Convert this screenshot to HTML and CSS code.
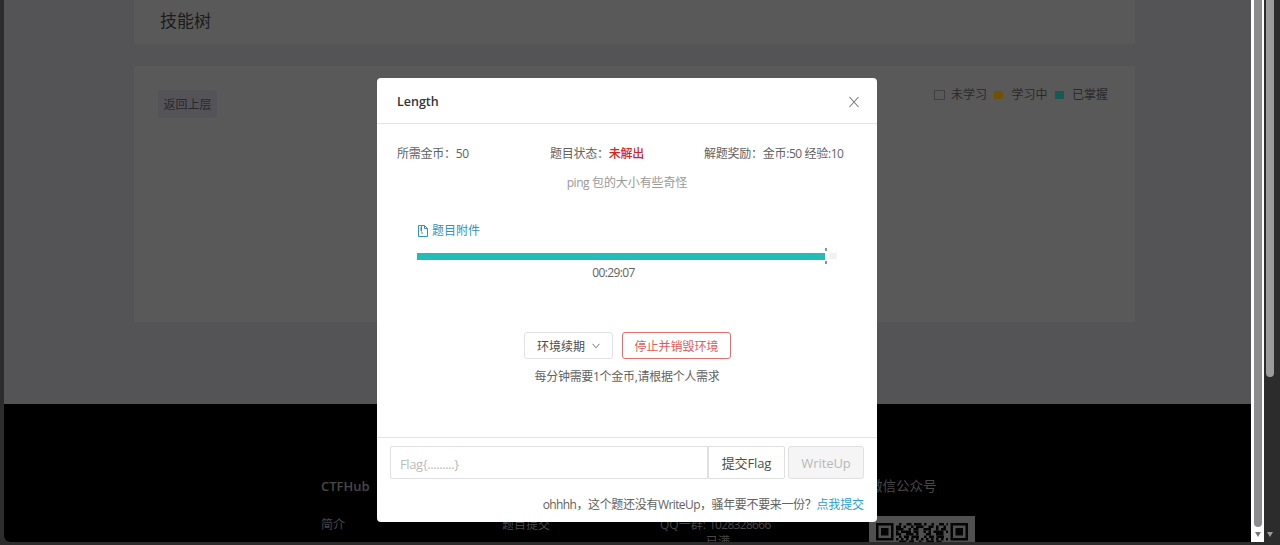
FILE: index.html
```
<!DOCTYPE html>
<html lang="zh-CN">
<head>
    <meta charset="UTF-8" />
    <meta name="viewport" content="width=device-width, initial-scale=1.0" />
    <title>CTFHub</title>
    <link rel="stylesheet" href="styles.css">
</head>
<body>
    <div class="window">
        <div class="page">
            <main class="content">
                <div class="card title-card">技能树</div>
                <div class="card tree-card">
                    <button class="back">返回上层</button>
                    <div class="legend">
                        <i class="dot todo"></i><span>未学习</span>
                        <i class="dot doing"></i><span>学习中</span>
                        <i class="dot done"></i><span>已掌握</span>
                    </div>
                </div>
            </main>
            <footer class="footer">
                <div class="col col-about">
                    <h4>CTFHub</h4>
                    <p>简介</p>
                </div>
                <div class="col col-submit">
                    <h4>&nbsp;</h4>
                    <p>题目提交</p>
                </div>
                <div class="col col-qq">
                    <h4>&nbsp;</h4>
                    <p>QQ一群: <span class="number">1028328666</span></p>
                    <p class="full">已满</p>
                </div>
                <div class="col col-wechat">
                    <h4>微信公众号</h4>
                    <svg class="qr" viewBox="0 0 106 106" width="106" height="106">
                        <rect width="106" height="106" fill="#505050" />
                        <g fill="none" stroke="#050505" stroke-width="2.5">
                            <rect x="8.25" y="8.25" width="15" height="15" />
                            <rect x="82.75" y="8.25" width="15" height="15" />
                            <path stroke-dasharray="2.5 5 5 2.5 7.5 2.5 2.5 5" d="M30 8.2H79" />
                            <path stroke-dasharray="5 2.5 2.5 5 2.5 2.5 7.5 5" d="M27 10.7H77" />
                            <path stroke-dasharray="7.5 5 2.5 2.5 5 5" d="M27 13.2H79" />
                            <path stroke-dasharray="2.5 2.5 10 2.5 5 5 2.5 2.5" d="M27 15.7H79" />
                            <path stroke-dasharray="5 5 7.5 2.5 2.5 7.5" d="M27 18.2H77" />
                            <path stroke-dasharray="2.5 2.5 5 2.5 7.5 5" d="M30 20.7H79" />
                            <path stroke-dasharray="2.5 2.5" d="M27 23.2H79" />
                            <path stroke-dasharray="7.5 2.5 5 5 2.5 5" d="M30 25.7H77" />
                        </g>
                        <path fill="#050505" d="M12 12h7.5v7.5H12zM86.5 12h7.5v7.5h-7.5z" />
                    </svg>
                </div>
            </footer>
        </div>

        <div class="scroll inner">
            <div class="thumb"></div>
            <div class="arrow"></div>
        </div>
        <div class="scroll outer">
            <div class="thumb"></div>
            <div class="arrow"></div>
        </div>
    </div>

    <div class="modal">
        <div class="modal-header">
            <span>Length</span>
            <svg width="12" height="12" viewBox="0 0 12 12" fill="none" stroke="#777" stroke-width="1.1">
                <path d="M1.5 1L10.5 11M10.5 1L1.5 11" />
            </svg>
        </div>
        <div class="modal-body">
            <div class="stats">
                <div>所需金币：<span class="latin">50</span></div>
                <div>题目状态：<b>未解出</b></div>
                <div>解题奖励：金币<span class="latin">:50</span> 经验<span class="latin">:10</span></div>
            </div>
            <p class="desc"><span class="latin">ping</span> 包的大小有些奇怪</p>
            <a class="attachment">
                <svg width="10" height="12" viewBox="0 0 10 12" fill="none" stroke="#3192bd">
                    <path d="M.5 .5H6.5L9.5 3.5V11.5H.5zM6.5 .5V3.5H9.5M3.5 1V6.5M2 3H3.5M2 5H3.5M3 8H5" />
                </svg>
                题目附件
            </a>
            <div class="progress"><div class="bar"></div><div class="rest"></div></div>
            <div class="time">00:29:07</div>
            <div class="actions">
                <button class="btn">环境续期
                    <svg width="8" height="6" viewBox="0 0 8 6" fill="none" stroke="#777"><path d="M.5 .8L4 4.8L7.5 .8" /></svg>
                </button>
                <button class="btn danger">停止并销毁环境</button>
            </div>
            <p class="note">每分钟需要1个金币,请根据个人需求</p>
        </div>
        <div class="modal-footer">
            <div class="flag-row">
                <input class="flag-input" type="text" placeholder="Flag{.........}" />
                <button class="submit">提交Flag</button>
                <button class="writeup" disabled>WriteUp</button>
            </div>
            <p class="hint"><span class="latin">ohhhh</span>，这个题还没有<span class="latin">WriteUp</span>，骚年要不要来一份？<a>点我提交</a></p>
        </div>
    </div>
</body>
</html>
```
FILE: styles.css
```
* {
    box-sizing: border-box;
}
body {
    margin: 0;
    height: 545px;
    overflow: hidden;
    position: relative;
    background: #2c2c2c;
    color: #626262;
    font-family: "Open Sans", "Noto Sans CJK SC", sans-serif;
    font-size: 12px;
    line-height: 18px;
}
p, h4 {
    margin: 0;
}
button {
    font-family: inherit;
    padding: 0;
}
.latin {
    letter-spacing: -0.5px;
}
.window {
    display: flex;
    height: 542px;
    padding-left: 4px;
}
.page {
    width: 1247px;
    height: 542px;
    overflow: hidden;
    background: #545457;
    border-bottom-left-radius: 6px;
    display: flex;
    flex-direction: column;
}
.content {
    height: 404px;
    flex: none;
    padding: 0 116px 0 130px;
}
.card {
    background: #595959;
}
.title-card {
    height: 44px;
    margin-bottom: 22px;
    padding: 8px 26px;
    font-size: 17px;
    line-height: 26px;
    color: #1c1c1c;
}
.tree-card {
    height: 256px;
    display: flex;
    justify-content: space-between;
    align-items: flex-start;
    padding: 20px 27px 0 24px;
}
.back {
    width: 59px;
    height: 28px;
    margin-top: 4px;
    border: 0;
    border-radius: 4px;
    background: #545458;
    color: #292929;
    font-size: 12px;
}
.legend {
    display: flex;
    align-items: center;
    color: #292929;
}
.legend span {
    margin-right: 7.5px;
}
.legend span:last-child {
    margin-right: 0;
}
.dot {
    width: 9px;
    height: 8px;
    margin-right: 8px;
}
.todo {
    width: 11px;
    height: 10px;
    margin-right: 6px;
    border: 1px solid #404040;
}
.doing {
    background: #6e5208;
}
.done {
    background: #175a55;
}
.footer {
    flex: 1;
    display: flex;
    padding: 73px 0 0 317px;
    background: #000;
    color: #484848;
}
.col h4 {
    font-size: 13px;
    line-height: 18px;
    font-weight: 600;
    margin-bottom: 21px;
}
.col-about {
    width: 181px;
}
.col-submit {
    width: 158px;
}
.col-qq {
    width: 209px;
}
.col-qq p {
    line-height: 17px;
}
.number {
    letter-spacing: -0.7px;
}
.col-qq .full {
    padding-left: 46px;
}
.col-wechat h4 {
    font-size: 13.5px;
    font-weight: 400;
}
.qr {
    display: block;
}
.scroll {
    display: flex;
    flex-direction: column;
    align-items: center;
}
.inner {
    width: 13px;
    background: #fff;
}
.outer {
    width: 16px;
    padding-right: 4px;
}
.thumb {
    width: 8px;
    height: 527px;
    border-radius: 0 0 4px 4px;
    background: #8c8c8e;
}
.outer .thumb {
    height: 377px;
    margin-bottom: 150px;
    background: #9b9b9b;
}
.arrow {
    margin-top: 5px;
    border: 3px solid transparent;
    border-top: 5px solid #777;
    border-bottom: 0;
}
.outer .arrow {
    border-top-color: #9b9b9b;
}
.modal {
    position: absolute;
    left: 377px;
    top: 78px;
    width: 500px;
    height: 444px;
    display: flex;
    flex-direction: column;
    background: #fff;
    border-radius: 4px;
}
.modal-header {
    flex: none;
    height: 46px;
    display: flex;
    align-items: center;
    justify-content: space-between;
    padding: 2px 17px 0 20px;
    border-bottom: 1px solid #e4e4e4;
    color: #333;
    font-size: 12.5px;
    font-weight: 600;
}
.modal-body {
    flex: none;
    height: 313px;
    display: flex;
    flex-direction: column;
    padding: 21px 20px 0;
}
.stats {
    display: grid;
    grid-template-columns: 153px 154px 1fr;
    white-space: nowrap;
    letter-spacing: -0.25px;
}
.stats b {
    color: #cf2626;
    font-weight: 500;
}
.desc {
    margin-top: 11px;
    text-align: center;
    color: #999;
    letter-spacing: -0.1px;
}
.attachment {
    display: flex;
    align-items: center;
    gap: 4px;
    margin: 30px 0 0 21px;
    color: #3192bd;
}
.progress {
    display: flex;
    align-items: center;
    width: 420px;
    height: 16px;
    margin: 8px 20px 0;
}
.bar {
    width: 408px;
    height: 7px;
    background: #22bcb9;
}
.rest {
    flex: 1;
    height: 16px;
    background:
        linear-gradient(#68a29f, #68a29f) 0 0 / 2px 3px no-repeat,
        linear-gradient(#68a29f, #68a29f) 0 100% / 2px 3px no-repeat,
        linear-gradient(#f2f2f2, #f2f2f2) 4px 50% / 8px 6px no-repeat;
}
.time {
    padding-right: 27px;
    text-align: center;
    letter-spacing: -0.6px;
}
.actions {
    display: flex;
    justify-content: center;
    gap: 9px;
    margin: 50px 0 0 1px;
}
.btn {
    width: 89px;
    height: 27px;
    display: flex;
    align-items: center;
    justify-content: center;
    gap: 7px;
    padding-top: 1px;
    border: 1px solid #e2e2e2;
    border-radius: 3px;
    background: #fff;
    color: #4d4d4d;
    font-size: 12px;
}
.danger {
    width: 109px;
    border-color: #e07070;
    color: #dc5c5c;
}
.note {
    margin-top: 9px;
    text-align: center;
    letter-spacing: -0.3px;
}
.modal-footer {
    flex: 1;
    padding: 8px 13px 0;
    border-top: 1px solid #e4e4e4;
}
.flag-row {
    display: flex;
    height: 33px;
}
.flag-input {
    width: 318px;
    padding: 2px 9px 0;
    border: 1px solid #e0e0e0;
    border-radius: 2px 0 0 2px;
    font-family: inherit;
    font-size: 13px;
    letter-spacing: -0.4px;
}
.flag-input::placeholder {
    color: #bbb;
}
.submit, .writeup {
    border: 1px solid #e0e0e0;
    border-radius: 0 2px 2px 0;
    background: #fff;
    color: #4d4d4d;
    font-size: 13px;
}
.submit {
    width: 77px;
    letter-spacing: -0.1px;
}
.writeup {
    width: 76px;
    margin-left: 3px;
    border-radius: 3px;
    background: #f5f5f5;
    color: #b8b8b8;
    letter-spacing: -0.1px;
}
.hint {
    margin-top: 17px;
    text-align: right;
    white-space: nowrap;
    letter-spacing: -0.35px;
}
.hint .latin {
    letter-spacing: -0.6px;
}
.hint a {
    color: #2e9bd0;
    letter-spacing: -0.1px;
}
```
